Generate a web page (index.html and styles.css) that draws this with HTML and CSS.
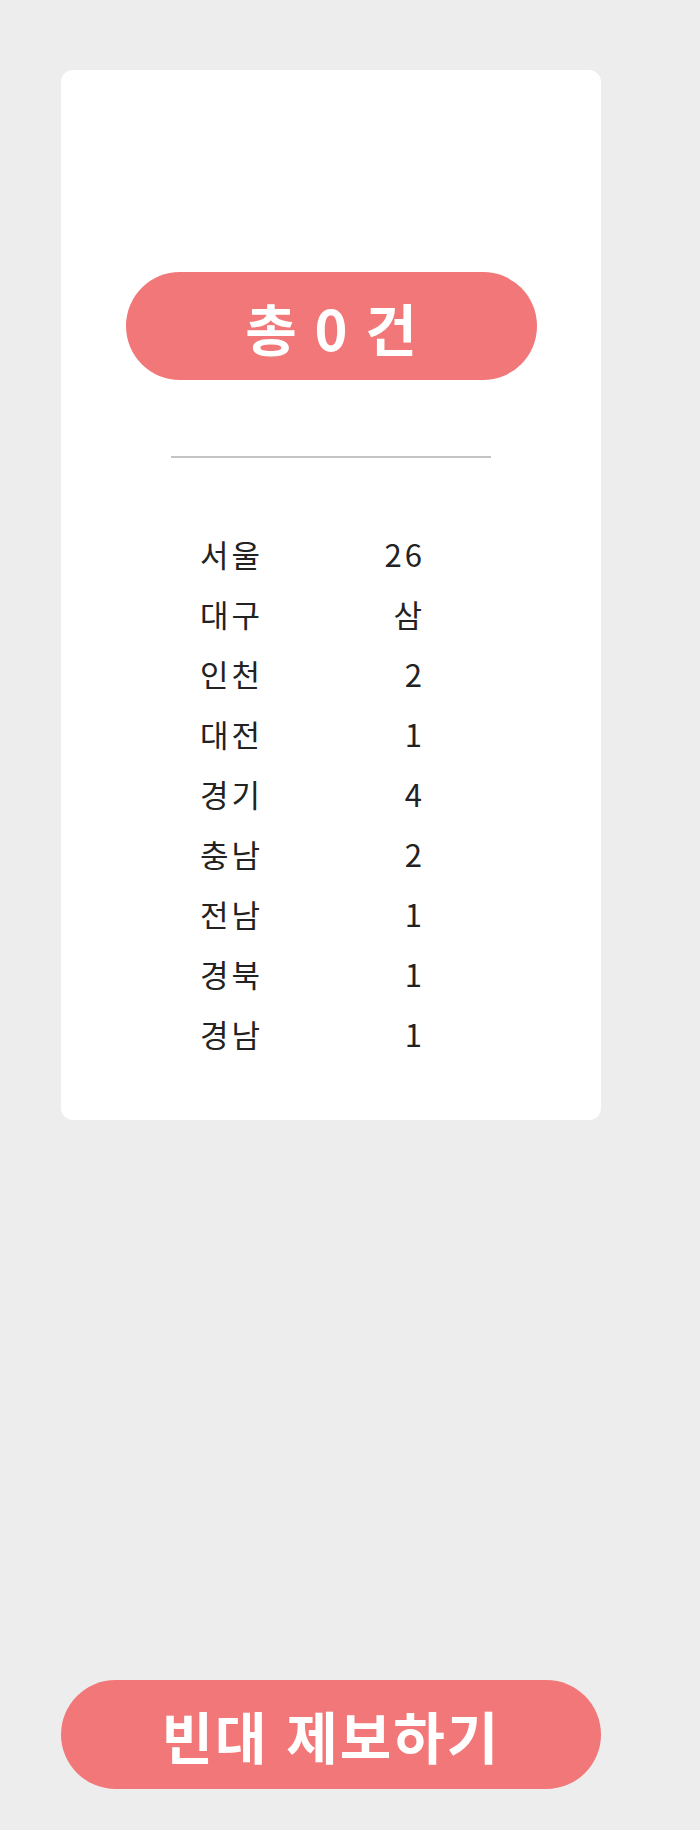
FILE: index.html
```html
<!DOCTYPE html>
<html lang="ko">

<head>
    <title>빈대 현황</title>
    <meta charset="UTF-8">
    <meta name="viewport" content="width=device-width, initial-scale=1">
    <link rel="stylesheet" href="styles.css">
</head>

<body>
    <div class="main">
        <div class="card">
            <div class="total">총 0 건</div>
            <hr class="line">
            <div class="list">
                <span>서울</span><span>26</span>
                <span>대구</span><span>삼</span>
                <span>인천</span><span>2</span>
                <span>대전</span><span>1</span>
                <span>경기</span><span>4</span>
                <span>충남</span><span>2</span>
                <span>전남</span><span>1</span>
                <span>경북</span><span>1</span>
                <span>경남</span><span>1</span>
            </div>
        </div>
        <button class="report">빈대 제보하기</button>
    </div>
</body>

</html>
```

FILE: styles.css
```css
* {
    padding: 0;
    margin: 0;
    box-sizing: border-box;
}

body {
    background-color: #ededed;
    font-family: "Noto Sans CJK KR", "Noto Sans", sans-serif;
}

.main {
    padding-top: 70px;
    padding-left: 61px;
    width: 601px;
}

.card {
    background-color: #fff;
    border-radius: 12px;
    width: 540px;
    height: 1050px;
    padding-top: 202px;
    display: flex;
    flex-direction: column;
    align-items: center;
}

.total {
    width: 411px;
    height: 108px;
    border-radius: 54px;
    background-color: #f27778;
    color: #fff;
    font-size: 56px;
    font-weight: 700;
    display: flex;
    justify-content: center;
    align-items: center;
    word-spacing: 2px;
}

.line {
    width: 320px;
    border: none;
    border-top: 2px solid #c4c4c4;
    margin-top: 76px;
}

.list {
    display: grid;
    grid-template-columns: 1fr auto;
    width: 222px;
    margin-top: 66px;
    margin-left: -40px;
    font-size: 31px;
    line-height: 60px;
    color: #222;
    letter-spacing: 3px;
}

.list span:nth-child(even) {
    text-align: right;
    margin-right: -3px;
}

.report {
    display: block;
    margin-top: 560px;
    width: 540px;
    height: 109px;
    border: none;
    border-radius: 55px;
    background-color: #f27778;
    color: #fff;
    font-family: inherit;
    font-size: 56px;
    font-weight: 700;
    letter-spacing: 2px;
}
```
